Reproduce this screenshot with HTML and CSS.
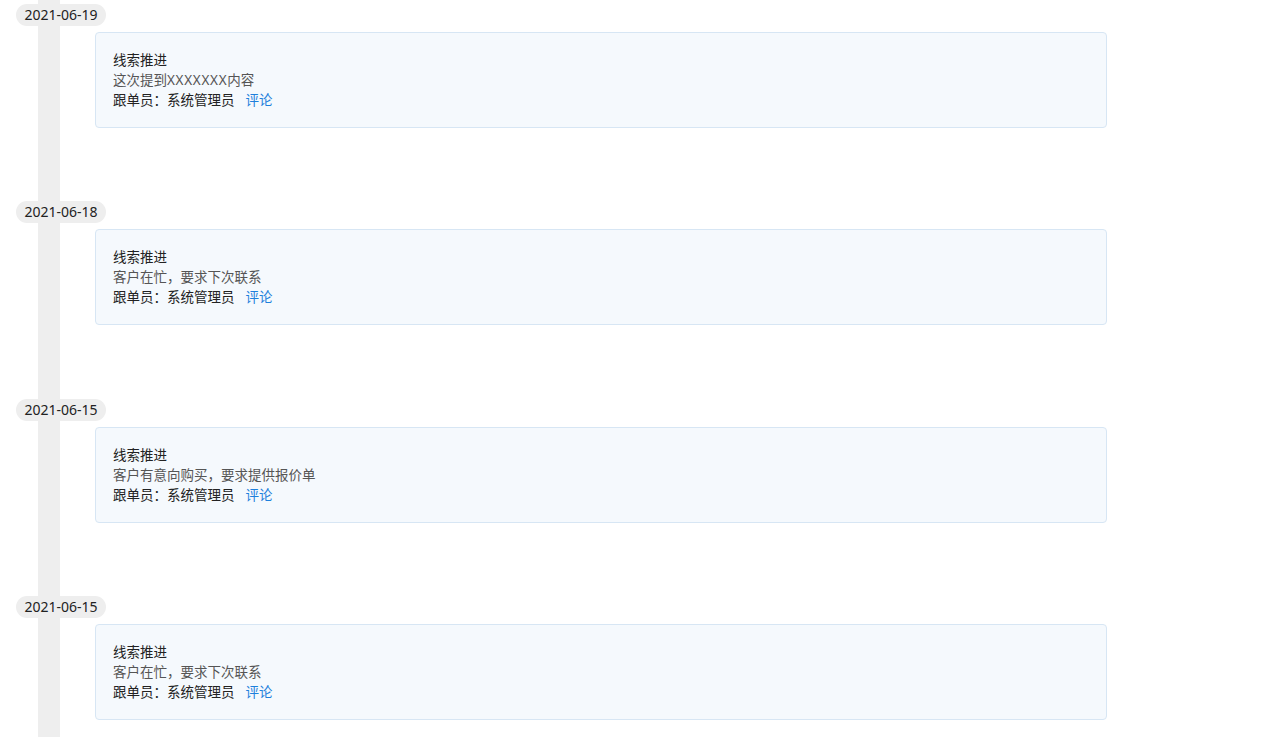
FILE: index.html
```html
<!DOCTYPE html>
<html lang="zh-CN">
<head>
  <meta charset="UTF-8">
  <title>跟进记录</title>
  <link rel="stylesheet" href="styles.css">
</head>
<body>
  <div class="timeline">
    <div class="timeline-item">
      <div class="date-badge">2021-06-19</div>
      <div class="record-card">
        <div class="record-title">线索推进</div>
        <div class="record-content">这次提到<span class="latin">XXXXXXX</span>内容</div>
        <div class="record-meta">跟单员：系统管理员<a class="comment-link" href="#">评论</a></div>
      </div>
    </div>
    <div class="timeline-item">
      <div class="date-badge">2021-06-18</div>
      <div class="record-card">
        <div class="record-title">线索推进</div>
        <div class="record-content">客户在忙，要求下次联系</div>
        <div class="record-meta">跟单员：系统管理员<a class="comment-link" href="#">评论</a></div>
      </div>
    </div>
    <div class="timeline-item">
      <div class="date-badge">2021-06-15</div>
      <div class="record-card">
        <div class="record-title">线索推进</div>
        <div class="record-content">客户有意向购买，要求提供报价单</div>
        <div class="record-meta">跟单员：系统管理员<a class="comment-link" href="#">评论</a></div>
      </div>
    </div>
    <div class="timeline-item">
      <div class="date-badge">2021-06-15</div>
      <div class="record-card">
        <div class="record-title">线索推进</div>
        <div class="record-content">客户在忙，要求下次联系</div>
        <div class="record-meta">跟单员：系统管理员<a class="comment-link" href="#">评论</a></div>
      </div>
    </div>
  </div>
</body>
</html>
```

FILE: styles.css
```css
body {
  margin: 0;
  background: #fff;
  font-family: "Noto Sans", "Noto Sans CJK SC", sans-serif;
  color: #333;
  height: 100vh;
  overflow: hidden;
}

.timeline {
  position: relative;
  padding: 4px 0 0 16px;
}

/* grey vertical rail behind the date badges */
.timeline::before {
  content: "";
  position: absolute;
  top: 0;
  left: 38px;
  width: 22px;
  height: 100vh;
  background: #eeeeee;
}

.timeline-item {
  position: relative;
  margin-bottom: 73.4px;
}

.timeline-item:last-child {
  margin-bottom: 0;
}

.date-badge {
  position: relative;
  display: inline-block;
  width: 90px;
  height: 22px;
  line-height: 22px;
  border-radius: 11px;
  background: #eeeeee;
  color: #222;
  font-size: 14px;
  text-align: center;
  vertical-align: top;
}

.record-card {
  position: relative;
  margin: 6px 0 0 79px;
  padding: 17px;
  height: 60px;
  width: 976px;
  background: #f5f9fd;
  border: 1px solid #d7e6f4;
  border-radius: 4px;
  font-size: 13.5px;
  line-height: 20px;
}

.record-title {
  color: #222;
}

.record-content {
  color: #555;
}

.record-content .latin {
  letter-spacing: 0.7px;
}

.record-meta {
  color: #222;
}

.comment-link {
  margin-left: 11px;
  color: #1e80dc;
  text-decoration: none;
}
```
